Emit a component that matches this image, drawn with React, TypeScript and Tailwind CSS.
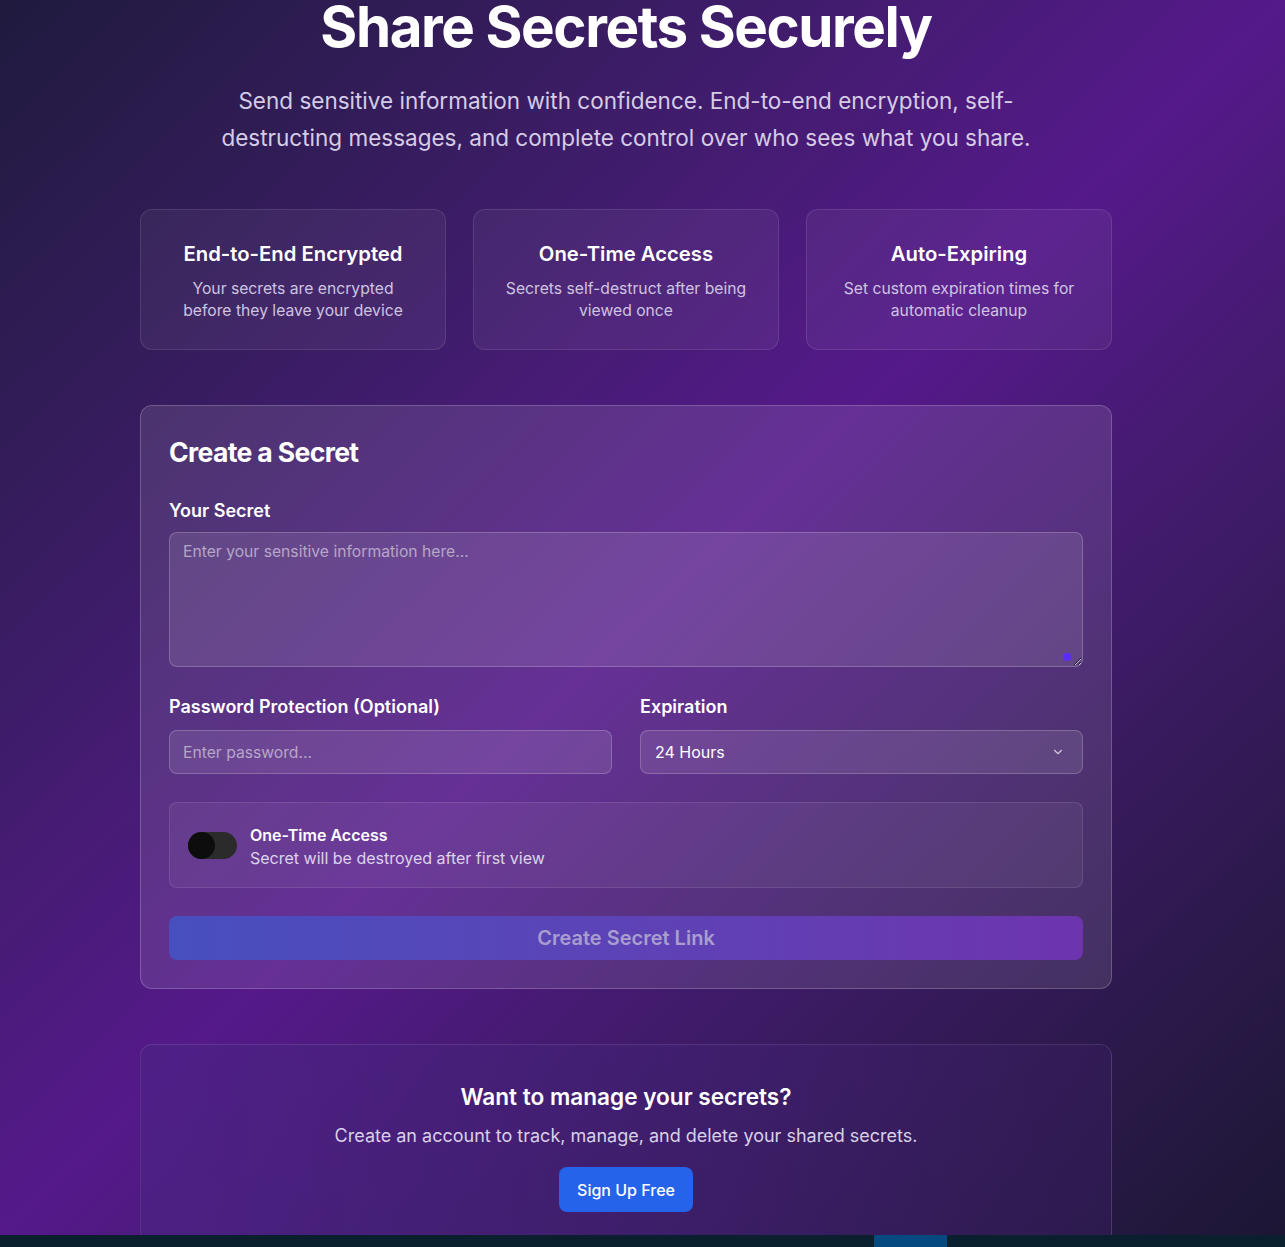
import { ChevronDown } from "lucide-react";

const features = [
  {
    title: "End-to-End Encrypted",
    text: "Your secrets are encrypted before they leave your device",
  },
  {
    title: "One-Time Access",
    text: "Secrets self-destruct after being viewed once",
  },
  {
    title: "Auto-Expiring",
    text: "Set custom expiration times for automatic cleanup",
  },
];

export default function App() {
  return (
    <div className="flex h-[1247px] w-full flex-col overflow-hidden font-['Inter',sans-serif] text-white">
      {/* PAGE */}
      <main className="flex-1 overflow-hidden bg-gradient-to-br from-[#1f1a3e] via-[#55198a] to-[#1c1634]">
        <div className="ml-0 w-[1252px]">
          {/* HERO */}
          <div className="-mt-[9px] flex flex-col items-center text-center">
            <h1 className="text-[56.5px] font-bold leading-[72px] tracking-tight">
              Share Secrets Securely
            </h1>

            <p className="mt-[19px] w-[830px] text-[22.5px] leading-[37px] text-[#d6cce6]">
              Send sensitive information with confidence. End-to-end encryption,
              self-destructing messages, and complete control over who sees what
              you share.
            </p>
          </div>

          {/* FEATURES */}
          <div className="mx-auto mt-[53px] grid w-[972px] grid-cols-3 gap-[27px]">
            {features.map((f) => (
              <div
                key={f.title}
                className="h-[141px] rounded-xl border border-white/10 bg-white/5 px-7 pt-[30px] text-center"
              >
                <h3 className="text-[20.3px] font-semibold leading-7">
                  {f.title}
                </h3>

                <p className="mt-[10px] text-[15.7px] leading-[22px] text-[#cfc4e0]">
                  {f.text}
                </p>
              </div>
            ))}
          </div>

          {/* FORM */}
          <section className="mx-auto mt-[55px] w-[972px] rounded-xl border border-white/20 bg-white/10 p-7">
            <h2 className="text-[26.6px] font-bold leading-9 tracking-tight">
              Create a Secret
            </h2>

            <label className="mt-[27px] block text-[18px] font-semibold leading-7">
              Your Secret
            </label>

            <div className="relative mt-[7px]">
              <textarea
                placeholder="Enter your sensitive information here..."
                className="block h-[135px] w-full resize-y rounded-lg border border-white/20 bg-white/10 px-[13px] py-[7px] text-[15.7px] leading-6 text-white outline-none placeholder:text-[#b6a6c8]"
              />

              <div className="absolute bottom-[6px] right-[12px] h-[8px] w-[8px] rounded-full bg-[#5b2bff]" />
            </div>

            <div className="mt-[26px] grid grid-cols-2 gap-7">
              <div>
                <label className="block text-[18px] font-semibold leading-7">
                  Password Protection (Optional)
                </label>

                <input
                  type="password"
                  placeholder="Enter password..."
                  className="mt-[9px] block h-[44px] w-full rounded-lg border border-white/20 bg-white/10 px-[13px] text-[15.7px] text-white outline-none placeholder:text-[#b6a6c8]"
                />
              </div>

              <div>
                <label className="block text-[18px] font-semibold leading-7">
                  Expiration
                </label>

                <div className="mt-[9px] flex h-[44px] items-center justify-between rounded-lg border border-white/20 bg-white/10 px-[14px] text-[16px]">
                  <span>24 Hours</span>

                  <ChevronDown size={14} className="mr-[3px] text-white/70" />
                </div>
              </div>
            </div>

            {/* ONE-TIME */}
            <div className="mt-7 flex h-[86px] items-center gap-[13px] rounded-lg border border-white/10 bg-white/5 px-[18px]">
              <div className="relative h-[27px] w-[49px] rounded-full bg-[#2b2b2b]">
                <div className="absolute left-0 top-0 h-[27px] w-[27px] rounded-full bg-[#0d0d0d]" />
              </div>

              <div className="mt-[4px]">
                <div className="text-[16px] font-semibold leading-[22px]">
                  One-Time Access
                </div>

                <div className="text-[16px] leading-[24px] text-[#ddd3ea]">
                  Secret will be destroyed after first view
                </div>
              </div>
            </div>

            <button className="mt-7 flex h-[44px] w-full items-center justify-center rounded-lg bg-gradient-to-r from-[#474fbf] to-[#6d34ae] text-[20px] font-semibold text-[#a99dd0]">
              Create Secret Link
            </button>
          </section>

          {/* CTA */}
          <section className="mx-auto mt-[55px] h-[230px] w-[972px] rounded-xl border border-white/10 bg-gradient-to-r from-[#4a2585]/60 to-[#3a1f62]/40 pt-[36px] text-center">
            <h3 className="text-[22.6px] font-semibold leading-8">
              Want to manage your secrets?
            </h3>

            <p className="mt-[9px] text-[18px] leading-7 text-[#d9d0e8]">
              Create an account to track, manage, and delete your shared
              secrets.
            </p>

            <button className="mt-[17px] h-[45px] rounded-lg bg-[#2563eb] px-[18px] text-[16px] font-medium">
              Sign Up Free
            </button>
          </section>
        </div>
      </main>

      {/* BOTTOM BAR */}
      <div className="flex h-3 bg-[#0a202e]">
        <div className="ml-[874px] h-3 w-[73px] bg-[#044a80]" />
      </div>
    </div>
  );
}
